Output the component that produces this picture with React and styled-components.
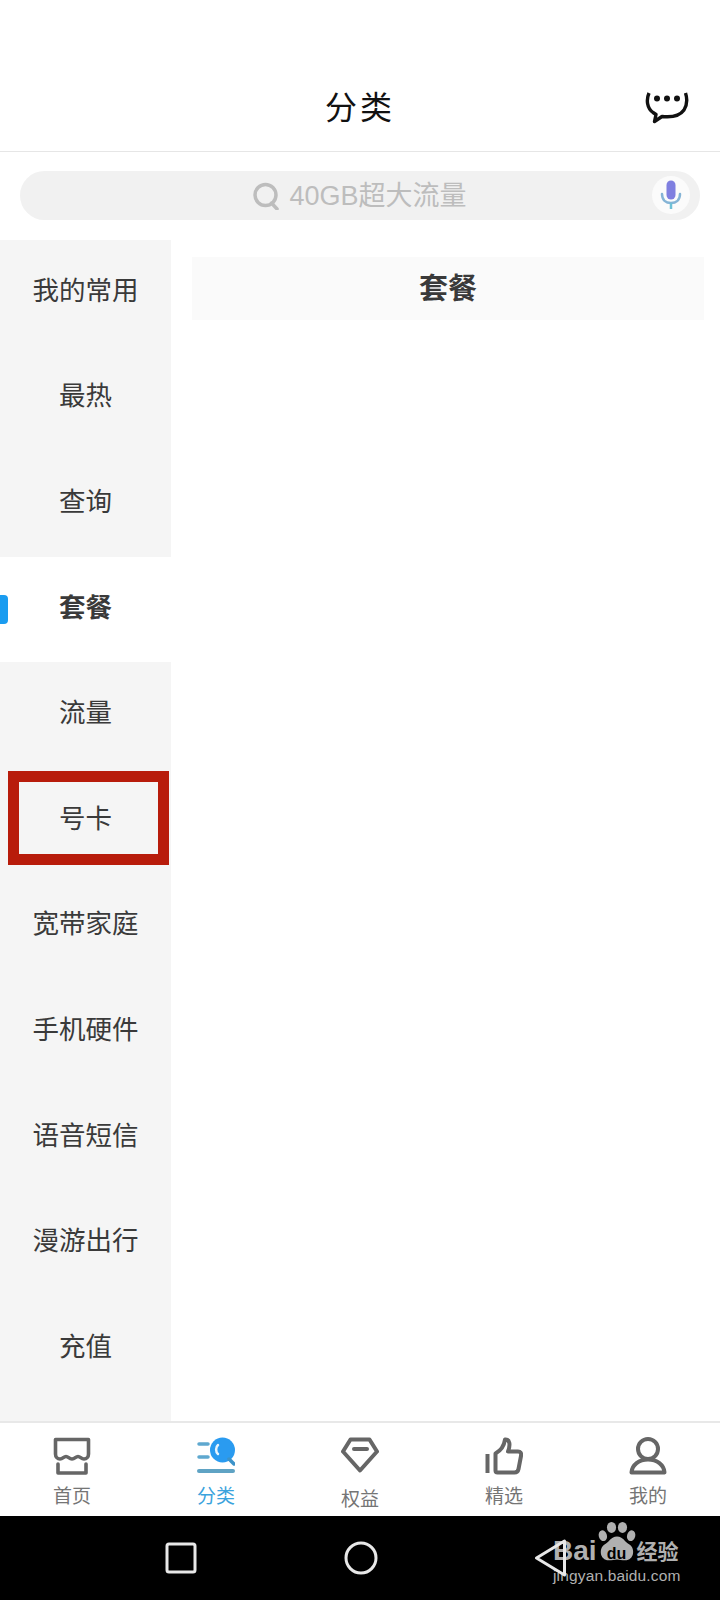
import React from "react";
import styled, { createGlobalStyle } from "styled-components";

const Global = createGlobalStyle`
  html, body { margin: 0; padding: 0; background: #fff; }
  * { box-sizing: border-box; }
`;

const Page = styled.div`
  width: 720px;
  height: 1600px;
  display: flex;
  flex-direction: column;
  background: #fff;
  overflow: hidden;
  font-family: "Noto Sans CJK SC", "Liberation Sans", sans-serif;
  color: #333;
`;

const Header = styled.header`
  flex: none;
  height: 152px;
  padding-top: 58px;
  display: grid;
  grid-template-columns: 1fr auto 1fr;
  align-items: center;
  border-bottom: 1px solid #e6e6e6;
`;

const Title = styled.h1`
  grid-column: 2;
  margin: 0;
  font-size: 32px;
  font-weight: 400;
  line-height: 44px;
  letter-spacing: 3px;
  color: #111;
`;

const ChatButton = styled.div`
  grid-column: 3;
  justify-self: end;
  display: flex;
  margin: 6px 31px 0 0;
`;

const SearchRow = styled.div`
  flex: none;
  padding: 19px 20px 0;
`;

const SearchBar = styled.div`
  position: relative;
  height: 49px;
  border-radius: 25px;
  background: #f1f1f1;
  display: flex;
  align-items: center;
  justify-content: center;
  gap: 10px;
`;

const Placeholder = styled.span`
  font-size: 27px;
  line-height: 40px;
  color: #bdbdbd;
  font-family: "Liberation Sans", "Noto Sans CJK SC", sans-serif;
`;

const MicBadge = styled.div`
  position: absolute;
  right: 10px;
  top: 5px;
  width: 38px;
  height: 38px;
  border-radius: 50%;
  background: #fbfbfb;
  display: flex;
  align-items: center;
  justify-content: center;
`;

const Body = styled.main`
  flex: 1;
  min-height: 0;
  margin-top: 20px;
  display: flex;
`;

const Sidebar = styled.nav`
  width: 171px;
  background: #f5f5f5;
  display: flex;
  flex-direction: column;
`;

const SideItem = styled.div`
  position: relative;
  flex: none;
  height: 105.6px;
  padding-bottom: 9px;
  display: flex;
  align-items: center;
  justify-content: center;
  font-size: 26.5px;
  color: #3a3a3a;
  font-weight: ${(p) => (p.$active ? 700 : 400)};
  background: ${(p) => (p.$active ? "#fff" : "transparent")};
`;

const ActiveMarker = styled.span`
  position: absolute;
  left: 0;
  top: 38px;
  width: 8px;
  height: 29px;
  background: #1a9cf0;
  border-radius: 0 4px 4px 0;
`;

const Highlight = styled.span`
  position: absolute;
  left: 8px;
  top: 3px;
  width: 161px;
  height: 94px;
  border: 11px solid #b81c0b;
`;

const Content = styled.section`
  flex: 1;
  padding: 17px 16px 0 21px;
`;

const SectionHead = styled.div`
  height: 63px;
  padding-bottom: 5px;
  background: #fafafa;
  display: flex;
  align-items: center;
  justify-content: center;
  font-size: 29px;
  font-weight: 700;
  color: #3a3a3a;
`;

const TabBar = styled.footer`
  flex: none;
  height: 95px;
  border-top: 2px solid #e8e8e8;
  display: grid;
  grid-template-columns: repeat(5, 1fr);
`;

const Tab = styled.div`
  display: flex;
  flex-direction: column;
  align-items: center;
  padding-top: 14px;
`;

const TabIcon = styled.div`
  height: 38px;
  display: flex;
`;

const TabLabel = styled.span`
  margin-top: ${(p) => p.$offset || 7}px;
  font-size: 19px;
  line-height: 26px;
  color: ${(p) => (p.$active ? "#3ba3dd" : "#757575")};
`;

const NavBar = styled.div`
  position: relative;
  flex: none;
  height: 84px;
  background: #000;
  display: flex;
  align-items: center;
  padding-left: 165px;
  gap: 147px;
`;

const BackKey = styled.div`
  position: relative;
  z-index: 1;
  display: flex;
  margin-left: 9px;
`;

const Watermark = styled.div`
  position: absolute;
  left: 553px;
  top: 6px;
  color: #b0b0b0;
  font-family: "Liberation Sans", sans-serif;
`;

const Brand = styled.div`
  display: flex;
  align-items: flex-end;
  height: 42px;
`;

const BrandWord = styled.span`
  font-size: 28px;
  font-weight: 700;
  line-height: 26px;
`;

const Paw = styled.div`
  position: relative;
  width: 40px;
  height: 42px;
  display: flex;
`;

const PawText = styled.span`
  position: absolute;
  left: 0;
  right: 0;
  bottom: 1px;
  text-align: center;
  font-size: 16px;
  font-weight: 700;
  line-height: 19px;
  color: #000;
`;

const BrandCn = styled.span`
  font-family: "Noto Sans CJK SC", sans-serif;
  font-size: 21px;
  font-weight: 700;
  line-height: 28px;
`;

const Domain = styled.div`
  font-size: 15.5px;
  line-height: 18px;
  margin-top: 3px;
  letter-spacing: 0.15px;
  white-space: nowrap;
`;

const ChatIcon = () => (
  <svg width="44" height="32" viewBox="0 0 44 32" fill="none">
    <path d="M4 1C1 8 2 16 8 20.500L11 22.500L9.500 29.500L17 24.500C26 25.500 34 25 39 18C42 13 42.500 7 40.500 1" stroke="#111" strokeWidth="3.400" strokeLinejoin="round" />
    <circle cx="12" cy="6.500" r="3" fill="#111" />
    <circle cx="22" cy="6.500" r="3" fill="#111" />
    <circle cx="32" cy="6.500" r="3" fill="#111" />
  </svg>
);

const SearchIcon = () => (
  <svg width="26" height="28" viewBox="0 0 26 28" fill="none" stroke="#bdbdbd" strokeWidth="3.500">
    <circle cx="12.500" cy="13" r="10.500" />
    <path d="M18.500 21L24 27" strokeLinecap="round" />
  </svg>
);

const MicIcon = () => (
  <svg width="22" height="30" viewBox="0 0 22 30" fill="none">
    <rect x="6.500" y="0.500" width="9" height="19" rx="4.500" fill="#7f7fe0" />
    <path d="M2 14C2 20 6 23 11 23C16 23 20 20 20 14" stroke="#85b4d6" strokeWidth="2.500" strokeLinecap="round" />
    <path d="M11 23V29" stroke="#6fc0d6" strokeWidth="2.500" />
  </svg>
);

const HomeIcon = () => (
  <svg width="38" height="38" viewBox="0 0 38 38" fill="none" stroke="#666" strokeWidth="3.600" strokeLinejoin="round">
    <path d="M2.500 2.500H35.500V17C35.500 20 33.500 22 31 22C28 22 27.500 19.500 25 19.500C22.500 19.500 22 22 19 22C16 22 15.500 19.500 13 19.500C10.500 19.500 10 22 7 22C4.500 22 2.500 20 2.500 17Z" />
    <path d="M5 27V36H33V27" strokeLinecap="round" />
  </svg>
);

const CategoryIcon = () => (
  <svg width="38" height="38" viewBox="0 0 38 38" fill="none">
    <path d="M2 7H11M2 20H11" stroke="#5fa8cf" strokeWidth="3.500" strokeLinecap="round" />
    <path d="M2 34H36" stroke="#5fa3c4" strokeWidth="4" strokeLinecap="round" />
    <circle cx="25.500" cy="13" r="12.500" fill="#2a9bf0" />
    <path d="M21 8C18.500 10 18.500 15 21 17" stroke="#e8f4fd" strokeWidth="2.500" strokeLinecap="round" />
    <path d="M32 22L37 27" stroke="#3c93c9" strokeWidth="3.500" strokeLinecap="round" />
  </svg>
);

const DiamondIcon = () => (
  <svg width="38" height="38" viewBox="0 0 38 38" fill="none" stroke="#666" strokeWidth="4" strokeLinejoin="round">
    <path d="M9.500 2.500H28.500L36 14.500L19 33.500L2 14.500Z" />
    <path d="M13 12H26" strokeLinecap="round" />
  </svg>
);

const ThumbIcon = () => (
  <svg width="38" height="38" viewBox="0 0 38 38" fill="none" stroke="#666" strokeWidth="4" strokeLinejoin="round">
    <path d="M2.500 17V36" />
    <path d="M10.500 16.500C15 14 19 9.500 20 2.500C25 2 25.500 8 23 14.500H33C35.500 14.500 36.500 16 36 19L33.500 32C33 34.500 32 35.500 29.500 35.500H12.500C11 35.500 10.500 35 10.500 33.500Z" />
  </svg>
);

const UserIcon = () => (
  <svg width="38" height="38" viewBox="0 0 38 38" fill="none" stroke="#666" strokeWidth="4" strokeLinejoin="round">
    <circle cx="19" cy="12" r="10" />
    <path d="M2.500 35.500C3 28 10 22.500 19 22.500C28 22.500 35 28 35.500 35.500Z" />
  </svg>
);

const PawMark = () => (
  <svg width="40" height="42" viewBox="0 0 42 46" fill="#b0b0b0">
    <ellipse cx="5.500" cy="15" rx="4.500" ry="6" transform="rotate(-15 5.500 15)" />
    <ellipse cx="15" cy="6" rx="5" ry="6" />
    <ellipse cx="27" cy="6" rx="5" ry="6" />
    <ellipse cx="36.500" cy="15" rx="4.500" ry="6" transform="rotate(15 36.500 15)" />
    <path d="M21 16C28 16 29 22 35 25C41 29 40 42 30 42C26 42 24 41 21 41C18 41 16 42 12 42C2 42 1 29 7 25C13 22 14 16 21 16Z" />
  </svg>
);

const categories = ["我的常用", "最热", "查询", "套餐", "流量", "号卡", "宽带家庭", "手机硬件", "语音短信", "漫游出行", "充值"];

const tabs = [
  { label: "首页", Icon: HomeIcon },
  { label: "分类", Icon: CategoryIcon, active: true },
  { label: "权益", Icon: DiamondIcon, offset: 10 },
  { label: "精选", Icon: ThumbIcon },
  { label: "我的", Icon: UserIcon },
];

export default function App() {
  return (
    <Page>
      <Global />
      <Header>
        <Title>分类</Title>
        <ChatButton>
          <ChatIcon />
        </ChatButton>
      </Header>
      <SearchRow>
        <SearchBar>
          <SearchIcon />
          <Placeholder>40GB超大流量</Placeholder>
          <MicBadge>
            <MicIcon />
          </MicBadge>
        </SearchBar>
      </SearchRow>
      <Body>
        <Sidebar>
          {categories.map((name) => (
            <SideItem key={name} $active={name === "套餐"}>
              {name === "套餐" && <ActiveMarker />}
              {name}
              {name === "号卡" && <Highlight />}
            </SideItem>
          ))}
        </Sidebar>
        <Content>
          <SectionHead>套餐</SectionHead>
        </Content>
      </Body>
      <TabBar>
        {tabs.map(({ label, Icon, active, offset }) => (
          <Tab key={label}>
            <TabIcon>
              <Icon />
            </TabIcon>
            <TabLabel $active={active} $offset={offset}>{label}</TabLabel>
          </Tab>
        ))}
      </TabBar>
      <NavBar>
        <svg width="32" height="32" viewBox="0 0 32 32" fill="none" stroke="#e8e8e8" strokeWidth="3">
          <rect x="2" y="2" width="28" height="28" rx="2" />
        </svg>
        <svg width="34" height="34" viewBox="0 0 34 34" fill="none" stroke="#e8e8e8" strokeWidth="3">
          <circle cx="17" cy="17" r="15" />
        </svg>
        <BackKey>
          <svg width="33" height="38" viewBox="0 0 33 38" fill="none" stroke="#e8e8e8" strokeWidth="3" strokeLinejoin="round">
            <path d="M30.500 2V36L2.500 19Z" />
          </svg>
        </BackKey>
        <Watermark>
          <Brand>
            <BrandWord>Bai</BrandWord>
            <Paw>
              <PawMark />
              <PawText>du</PawText>
            </Paw>
            <BrandCn>经验</BrandCn>
          </Brand>
          <Domain>jingyan.baidu.com</Domain>
        </Watermark>
      </NavBar>
    </Page>
  );
}
